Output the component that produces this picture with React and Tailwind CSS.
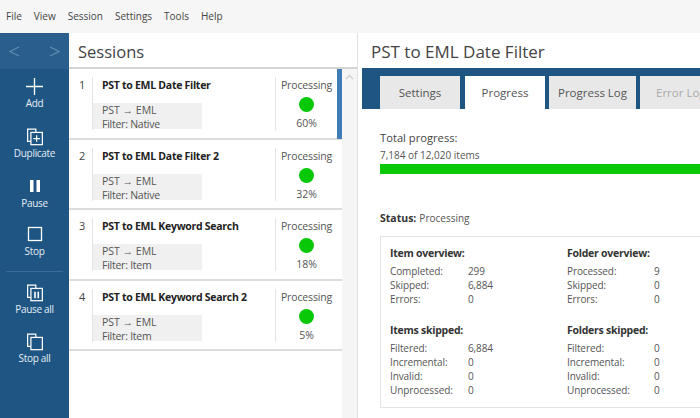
import React from "react";

const font = { fontFamily: '"Open Sans", sans-serif' };

const sessions = [
  { id: 1, name: "PST to EML Date Filter", filter: "Filter: Native", pct: "60%" },
  { id: 2, name: "PST to EML Date Filter 2", filter: "Filter: Native", pct: "32%" },
  { id: 3, name: "PST to EML Keyword Search", filter: "Filter: Item", pct: "18%" },
  { id: 4, name: "PST to EML Keyword Search 2", filter: "Filter: Item", pct: "5%" },
];

const Stack = ({ children }) => (
  <svg width="18" height="19" viewBox="0 0 22 22" fill="none" stroke="currentColor" strokeWidth="1.5">
    <path d="M6 17H2V2h10v4" />
    <rect x="6" y="6" width="14" height="15" />
    {children}
  </svg>
);

const ActionButton = ({ icon, label, className = "" }) => (
  <div className={`flex flex-col items-center text-white ${className}`}>
    <div className="h-[22px] flex items-center justify-center">{icon}</div>
    <span className="text-[10px] leading-[16px] -mt-[2px] tracking-[-0.3px] text-[#e4edf4]">{label}</span>
  </div>
);

const Stat = ({ label, value, valueWidth }) => (
  <div className="flex h-[14px] items-center">
    <span className={`${valueWidth} shrink-0`}>{label}</span>
    <span>{value}</span>
  </div>
);

const StatGroup = ({ title, rows, labelWidth, className = "" }) => (
  <div className={className}>
    <div className="font-bold text-[10.5px] leading-[14px] text-[#333] mb-[4px] tracking-[-0.25px]">{title}</div>
    <div className="text-[10px] text-[#555] tracking-[-0.1px]">
      {rows.map(([l, v]) => (
        <Stat key={l} label={l} value={v} valueWidth={labelWidth} />
      ))}
    </div>
  </div>
);

const SessionRow = ({ s }) => (
  <div className="h-[70.5px] border-b-2 border-[#dcdcdc] flex pt-[8px] pl-[10px] bg-white">
    <div className="w-[12px] text-[11px] leading-[15px] text-[#444]">{s.id}</div>
    <div className="w-px h-[53px] bg-[#e3e3e3] ml-[1px]"></div>
    <div className="w-[182px] pl-[9px]">
      <div className="mt-px text-[10.5px] font-bold leading-[15px] text-[#222] whitespace-nowrap tracking-[-0.28px]">{s.name}</div>
      <div className="mt-[10px] w-[109px] -ml-[9px] pl-[9px] h-[26px] bg-[#f0f0f0] text-[10.5px] leading-[14px] text-[#555]">
        <div>PST → EML</div>
        <div className="whitespace-nowrap tracking-[-0.25px]">{s.filter}</div>
      </div>
    </div>
    <div className="w-px h-[53px] bg-[#e3e3e3]"></div>
    <div className="w-[61px] pt-[1px] flex flex-col items-center text-[#555]">
      <div className="text-[10.5px] leading-[15px] tracking-[-0.15px]">Processing</div>
      <div className="w-[15px] h-[15px] rounded-full bg-[#08c808] mt-[4px]"></div>
      <div className="text-[10.5px] leading-[14px] mt-[4px]">{s.pct}</div>
    </div>
  </div>
);

export default function App() {
  return (
    <div className="w-[700px] h-[418px] overflow-hidden flex flex-col bg-white" style={font}>
      <div className="h-[33px] shrink-0 bg-[#f6f6f6] flex items-center gap-[12px] pl-[6px] text-[10px] text-[#444]">
        <span>File</span>
        <span>View</span>
        <span>Session</span>
        <span>Settings</span>
        <span>Tools</span>
        <span>Help</span>
      </div>
      <div className="flex flex-1 min-h-0">
        <div className="w-[69px] shrink-0 bg-[#1f5583] flex flex-col">
          <div className="h-[36px] bg-[#2a5f8d] flex items-center justify-between px-[9px] text-[#5f8bb0]">
            <svg width="11" height="11" viewBox="0 0 11 11" fill="none" stroke="currentColor" strokeWidth="1.2">
              <path d="M10 1L1 5.5 10 10" />
            </svg>
            <svg width="11" height="11" viewBox="0 0 11 11" fill="none" stroke="currentColor" strokeWidth="1.2">
              <path d="M1 1l9 4.5L1 10" />
            </svg>
          </div>
          <ActionButton
            className="mt-[6px]"
            label="Add"
            icon={
              <svg width="17" height="17" viewBox="0 0 17 17" stroke="currentColor" strokeWidth="1.3">
                <path d="M8.5 0v17M0 8.5h17" />
              </svg>
            }
          />
          <ActionButton
            className="mt-[14px]"
            label="Duplicate"
            icon={
              <Stack>
                <path d="M13 9.5v8M9 13.5h8" />
              </Stack>
            }
          />
          <ActionButton
            className="mt-[14px]"
            label="Pause"
            icon={
              <svg width="12" height="14" viewBox="0 0 12 14" fill="currentColor">
                <rect x="1" y="1" width="3.5" height="12" />
                <rect x="7.5" y="1" width="3.5" height="12" />
              </svg>
            }
          />
          <ActionButton
            className="mt-[12px]"
            label="Stop"
            icon={
              <svg width="16" height="16" viewBox="0 0 16 16" fill="none" stroke="currentColor" strokeWidth="1.3">
                <rect x="1.5" y="1.5" width="13" height="13" />
              </svg>
            }
          />
          <div className="h-px bg-[#3a6c96] mx-[6px] mt-[12px]"></div>
          <ActionButton
            className="mt-[9px]"
            label="Pause all"
            icon={
              <Stack>
                <path d="M11 10v8M15 10v8" strokeWidth="2" />
              </Stack>
            }
          />
          <ActionButton className="mt-[13px]" label="Stop all" icon={<Stack />} />
        </div>

        <div className="w-[288px] shrink-0 flex flex-col bg-white">
          <div className="h-[36px] text-[16.5px] flex items-center pl-[9px] pt-[4px] text-[#444] border-b-2 border-[#d5d5d5]">Sessions</div>
          <div className="flex flex-1 min-h-0">
            <div className="w-[273px] relative">
              {sessions.map((s) => (
                <SessionRow key={s.id} s={s} />
              ))}
              <div className="absolute right-0 top-0 w-[5px] h-[70px] bg-[#3f7cb8]"></div>
            </div>
            <div className="w-[15px] bg-[#f5f5f5] flex justify-center pt-[5px]">
              <svg width="9" height="6" viewBox="0 0 9 6" fill="none" stroke="#d0d0d0" strokeWidth="1.3">
                <path d="M1 5l3.5-3.5L8 5" />
              </svg>
            </div>
          </div>
        </div>

        <div className="w-[5px] shrink-0 bg-white border-l border-[#e0e0e0]"></div>

        <div className="flex-1 min-w-0 flex flex-col bg-white">
          <div className="h-[35px] shrink-0 flex items-center pl-[9px] pt-[2px] text-[17px] text-[#444] whitespace-nowrap">PST to EML Date Filter</div>
          <div className="h-[41px] shrink-0 bg-[#1f5583] flex items-end pl-[18px] overflow-hidden text-[11.5px]">
            <div className="w-[80px] h-[33px] shrink-0 bg-[#e8e8e8] text-[#555] flex items-center justify-center">Settings</div>
            <div className="w-[80px] h-[33px] ml-[5px] shrink-0 bg-white text-[#555] flex items-center justify-center">Progress</div>
            <div className="w-[87px] h-[33px] ml-[4px] shrink-0 bg-[#e8e8e8] text-[#555] flex items-center justify-center">Progress Log</div>
            <div className="w-[60px] h-[33px] ml-[4px] shrink-0 bg-[#e8e8e8] text-[#aaa] flex items-center pl-[16px] whitespace-nowrap">Error Log</div>
          </div>
          <div className="pl-[18px] flex-1 min-h-0">
            <div className="mt-[21px] text-[11.2px] leading-[16px] text-[#444]">Total progress:</div>
            <div className="text-[10px] leading-[16px] mt-px text-[#555]">7,184 of 12,020 items</div>
            <div className="h-[10px] bg-[#08c808] mt-px w-[320px]"></div>
            <div className="mt-[37px] text-[10px] leading-[14px] text-[#555]">
              <span className="font-bold text-[#333] mr-[3px] text-[10.5px]">Status:</span>Processing
            </div>
            <div className="mt-[11px] w-[340px] h-[172px] border border-[#e4e4e4] pl-[9px] pt-[9px] grid grid-cols-[177px_1fr] grid-rows-[69px_1fr]">
              <StatGroup
                title="Item overview:"
                labelWidth="w-[78px]"
                rows={[["Completed:", "299"], ["Skipped:", "6,884"], ["Errors:", "0"]]}
              />
              <StatGroup
                title="Folder overview:"
                labelWidth="w-[87px]"
                rows={[["Processed:", "9"], ["Skipped:", "0"], ["Errors:", "0"]]}
              />
              <StatGroup
                className="mt-[8px]"
                title="Items skipped:"
                labelWidth="w-[78px]"
                rows={[["Filtered:", "6,884"], ["Incremental:", "0"], ["Invalid:", "0"], ["Unprocessed:", "0"]]}
              />
              <StatGroup
                className="mt-[8px]"
                title="Folders skipped:"
                labelWidth="w-[87px]"
                rows={[["Filtered:", "0"], ["Incremental:", "0"], ["Invalid:", "0"], ["Unprocessed:", "0"]]}
              />
            </div>
          </div>
        </div>
      </div>
    </div>
  );
}
